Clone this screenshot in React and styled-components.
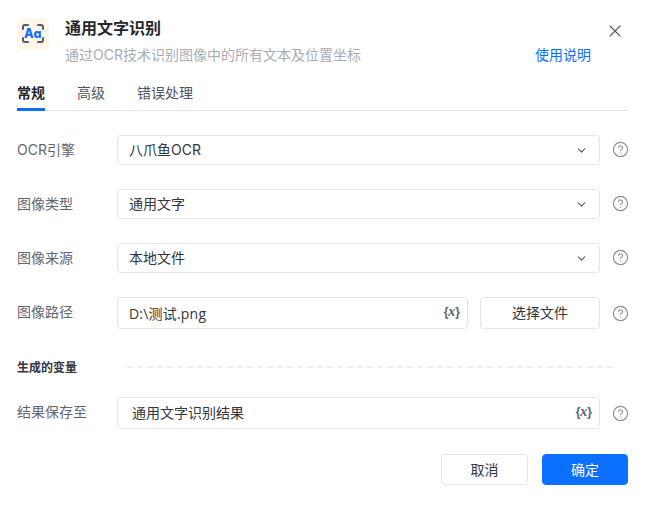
import styled, { createGlobalStyle } from 'styled-components';
import { ChevronDown, CircleHelp, X } from 'lucide-react';

const GlobalStyle = createGlobalStyle`
  html, body {
    margin: 0;
    padding: 0;
    background: #fff;
  }
  body {
    font-family: Inter, "Noto Sans CJK SC", sans-serif;
    color: #33363d;
  }
  * {
    box-sizing: border-box;
  }
`;

const Dialog = styled.div`
  width: 647px;
  height: 505px;
  padding: 18px 18px 0 17px;
  overflow: hidden;
`;

const Header = styled.div`
  display: flex;
  height: 50px;
  align-items: flex-start;
`;

const Logo = styled.div`
  width: 32px;
  height: 32px;
  flex: none;
  margin-right: 16px;
  border-radius: 6px;
  background: #fff6e9;
  display: flex;
  align-items: center;
  justify-content: center;
`;

const LogoText = styled.text`
  font-family: Inter, sans-serif;
  font-size: 12.5px;
  font-weight: 800;
  font-feature-settings: "cv11";
  letter-spacing: 0.4px;
  fill: #0b6fff;
`;

const HeaderText = styled.div`
  flex: 1;
  min-width: 0;
`;

const Title = styled.div`
  margin-top: -1px;
  font-size: 16px;
  line-height: 22px;
  font-weight: 700;
  color: #25272c;
`;

const SubRow = styled.div`
  display: flex;
  justify-content: space-between;
  margin-top: 6px;
  padding-right: 14px;
  font-size: 14px;
  line-height: 20px;
`;

const Subtitle = styled.div`
  color: #a9acb3;
`;

const HelpLink = styled.a`
  color: #0b6fff;
`;

const CloseButton = styled.button`
  width: 20px;
  height: 20px;
  margin: 3px 4px 0 0;
  padding: 0;
  border: 0;
  background: none;
  color: #555963;
  display: flex;
  align-items: center;
  justify-content: center;
`;

const Tabs = styled.div`
  display: flex;
  gap: 32px;
  height: 43px;
  margin-right: 1px;
  padding-top: 15px;
  border-bottom: 1px solid #e3e4e9;
`;

const Tab = styled.div`
  height: 28px;
  font-size: 14px;
  line-height: 20px;
  font-weight: ${props => (props.$active ? 700 : 400)};
  color: ${props => (props.$active ? '#25272c' : '#51555e')};
  border-bottom: ${props => (props.$active ? '3px solid #0b6fff' : '0')};
`;

const Form = styled.div`
  display: flex;
  flex-direction: column;
  margin-top: 24px;
`;

const Row = styled.div`
  display: flex;
  align-items: center;
  height: ${props => props.$height || 30}px;
  margin-bottom: 24px;
`;

const Label = styled.div`
  width: 100px;
  flex: none;
  font-size: 14px;
  line-height: 20px;
  color: #63666e;
  padding-bottom: ${props => (props.$raised ? 2 : 0)}px;
`;

const Field = styled.div`
  flex: 1;
  min-width: 0;
  height: 100%;
  display: flex;
  align-items: center;
  justify-content: space-between;
  padding: 0 ${props => props.$right || 11}px 0 ${props => props.$left || 11}px;
  border: 1px solid #e3e4e9;
  border-radius: 4px;
  font-size: 14px;
  color: #33363d;
  background: #fff;
`;

const FieldText = styled.span`
  padding-bottom: ${props => (props.$raised ? 2 : 0)}px;
`;

const PathText = styled.span`
  font-family: "Open Sans", "Noto Sans CJK SC", sans-serif;
  letter-spacing: 0.2px;
`;

const VarMark = styled.span`
  font-family: "Liberation Sans", sans-serif;
  font-size: 12px;
  font-weight: 700;
  color: #5e626b;
  padding-bottom: 2px;

  i {
    font-family: "Liberation Serif", serif;
    font-size: 14px;
  }
`;

const FileButton = styled.button`
  width: 120px;
  height: 100%;
  flex: none;
  margin-left: 12px;
  padding: 0 0 2px;
  border: 1px solid #e3e4e9;
  border-radius: 4px;
  background: #fff;
  font: inherit;
  font-size: 14px;
  color: #33363d;
`;

const Hint = styled.div`
  width: 29px;
  flex: none;
  display: flex;
  justify-content: flex-end;
  color: #8d9099;
  padding-bottom: ${props => (props.$raised ? 2 : 0)}px;
`;

const Section = styled.div`
  display: flex;
  align-items: center;
  height: 20px;
  margin: 4px 0 20px;
`;

const SectionLabel = styled.div`
  width: 110px;
  flex: none;
  font-size: 12px;
  font-weight: 700;
  color: #33363d;
  padding-bottom: 2px;
`;

const Dashes = styled.div`
  flex: 1;
  margin-right: 16px;
  border-top: 2px dashed #eeeff2;
`;

const Footer = styled.div`
  display: flex;
  justify-content: flex-end;
  gap: 14px;
  margin-top: 1px;
  padding-right: 1px;
`;

const FooterButton = styled.button`
  height: 31px;
  width: ${props => (props.$primary ? 86 : 87)}px;
  padding: 0 0 2px;
  border-radius: 4px;
  border: 1px solid ${props => (props.$primary ? '#0b6fff' : '#e3e4e9')};
  background: ${props => (props.$primary ? '#0b6fff' : '#fff')};
  color: ${props => (props.$primary ? '#fff' : '#33363d')};
  font: inherit;
  font-size: 14px;
`;

const LogoIcon = () => (
  <svg width="24" height="24" viewBox="0 0 24 24" fill="none">
    <path
      d="M2 7V5A2 2 0 0 1 4 3H7M17 3H20A2 2 0 0 1 22 5V7M22 16V18A2 2 0 0 1 20 20H17M7 20H4A2 2 0 0 1 2 18V16"
      stroke="#565b66"
      strokeWidth="2"
      strokeLinecap="round"
    />
    <LogoText x="12" y="16" textAnchor="middle">
      Aa
    </LogoText>
  </svg>
);

const Help = ({ raised }) => (
  <Hint $raised={raised}>
    <CircleHelp size={17} strokeWidth={1.7} />
  </Hint>
);

const Mark = () => (
  <VarMark>
    {'{'}
    <i>x</i>
    {'}'}
  </VarMark>
);

const SelectRow = ({ label, value }) => (
  <Row>
    <Label>{label}</Label>
    <Field>
      <FieldText $raised>{value}</FieldText>
      <ChevronDown size={13} strokeWidth={2} color="#555963" />
    </Field>
    <Help raised />
  </Row>
);

export default function App() {
  return (
    <Dialog>
      <GlobalStyle />
      <Header>
        <Logo>
          <LogoIcon />
        </Logo>
        <HeaderText>
          <Title>通用文字识别</Title>
          <SubRow>
            <Subtitle>通过OCR技术识别图像中的所有文本及位置坐标</Subtitle>
            <HelpLink>使用说明</HelpLink>
          </SubRow>
        </HeaderText>
        <CloseButton>
          <X size={20} strokeWidth={1.3} />
        </CloseButton>
      </Header>
      <Tabs>
        <Tab $active>常规</Tab>
        <Tab>高级</Tab>
        <Tab>错误处理</Tab>
      </Tabs>
      <Form>
        <SelectRow label="OCR引擎" value="八爪鱼OCR" />
        <SelectRow label="图像类型" value="通用文字" />
        <SelectRow label="图像来源" value="本地文件" />
        <Row $height={32}>
          <Label $raised>图像路径</Label>
          <Field $right={7}>
            <PathText>D:\测试.png</PathText>
            <Mark />
          </Field>
          <FileButton>选择文件</FileButton>
          <Help />
        </Row>
        <Section>
          <SectionLabel>生成的变量</SectionLabel>
          <Dashes />
        </Section>
        <Row $height={32}>
          <Label $raised>结果保存至</Label>
          <Field $left={14} $right={7}>
            <FieldText $raised>通用文字识别结果</FieldText>
            <Mark />
          </Field>
          <Help />
        </Row>
      </Form>
      <Footer>
        <FooterButton>取消</FooterButton>
        <FooterButton $primary>确定</FooterButton>
      </Footer>
    </Dialog>
  );
}
